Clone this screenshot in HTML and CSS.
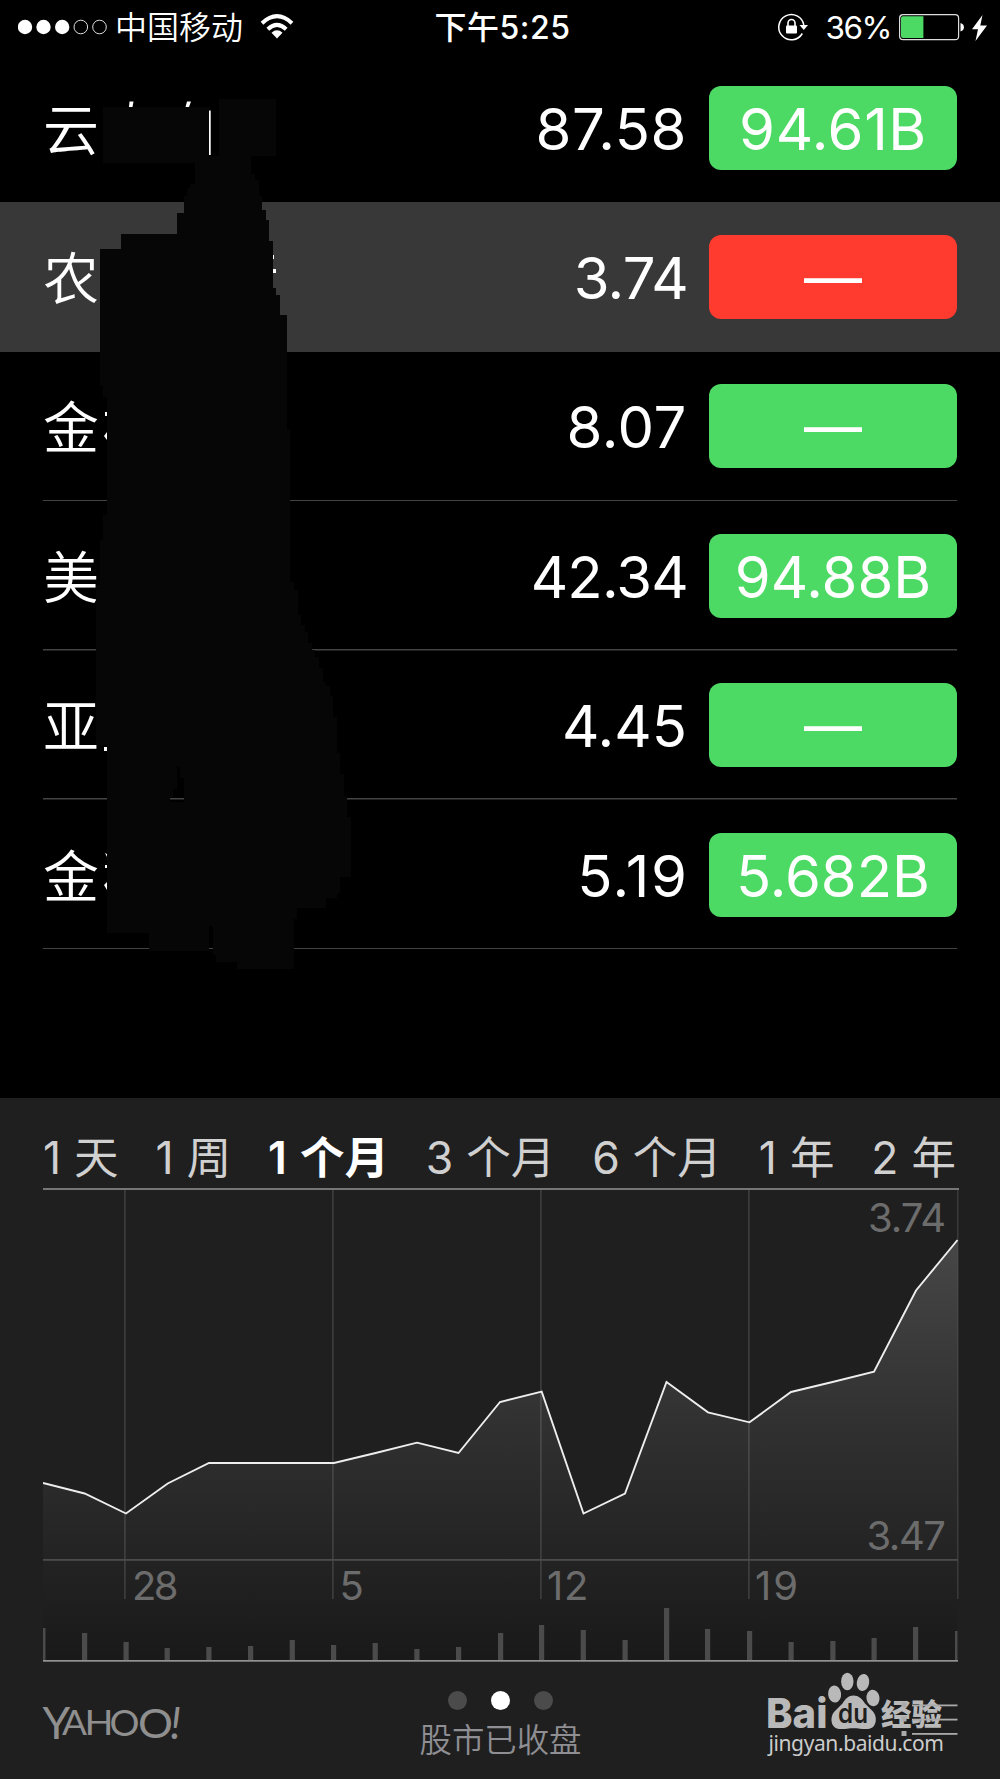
FILE: index.html
```html
<!DOCTYPE html>
<html lang="zh-CN">
<head>
<meta charset="utf-8">
<title>股市</title>
<link rel="stylesheet" href="styles.css">
</head>
<body>
<main class="screen">
  <header class="status">
    <div class="status-left">
      <svg class="signal" width="90" height="16" viewBox="0 0 90 16">
        <g fill="#fff"><circle cx="7" cy="8" r="7.2"/><circle cx="25.500" cy="8" r="7.2"/><circle cx="44.200" cy="8" r="7.2"/></g>
        <g fill="none" stroke="#ddd"><circle cx="62.800" cy="8" r="6.800"/><circle cx="81.500" cy="8" r="6.800"/></g>
      </svg>
      <span class="carrier">中国移动</span>
      <svg class="wifi" width="34" height="26" viewBox="0 0 34 26" fill="none" stroke="#fff" stroke-width="4">
        <path d="M2 9.2Q17-4.8 32 9.2M7.8 15.2Q17 6.600 26.200 15.200"/>
        <path fill="#fff" stroke="none" d="M11.5 18.7Q17 14 22.500 18.700L17 24.500Z"/>
      </svg>
    </div>
    <span class="clock">下午5:25</span>
    <div class="status-right">
      <svg class="lock" width="30" height="28" viewBox="0 0 30 28">
        <path d="M24.3 20.5A12.6 12.6 0 1 1 25.800 12" fill="none" stroke="#fff" stroke-width="1.5"/>
        <path d="M21.5 12h8.500l-4.200 5z" fill="#fff"/>
        <rect x="8" y="12.5" width="11" height="8" rx="1" fill="#fff"/>
        <path d="M10 13V10a3.500 3.500 0 0 1 7 0v3" fill="none" stroke="#fff" stroke-width="1.6"/>
      </svg>
      <span class="percent">36%</span>
      <svg class="battery" width="66" height="27" viewBox="0 0 66 27">
        <rect x=".6" y=".7" width="59" height="25" rx="3.5" fill="none" stroke="#ddd" stroke-width="1.2"/>
        <path d="M4 2.3h20.400v21.800H4a2 2 0 0 1-2-2V4.300a2 2 0 0 1 2-2z" fill="#4cd964"/>
        <path d="M61.5 9q3.400 1 3.400 4.200t-3.400 4.200z" fill="#fff"/>
      </svg>
      <svg class="bolt" width="15" height="26" viewBox="0 0 15 26"><path d="M10.5 0L0 14.300h6L3.500 26L15 10.500H8.300z" fill="#fff"/></svg>
    </div>
  </header>

  <section class="stocks">
    <div class="row"><span class="name">云</span><span class="price loose">87.58</span><span class="badge loose">94.61B</span></div>
    <div class="row row-active"><span class="name">农</span><span class="price tight">3.74</span><span class="badge badge-red">—</span></div>
    <div class="row row-line"><span class="name">金</span><span class="price loose">8.07</span><span class="badge">—</span></div>
    <div class="row row-line"><span class="name">美</span><span class="price tight">42.34</span><span class="badge">94.88B</span></div>
    <div class="row row-line"><span class="name">亚</span><span class="price">4.45</span><span class="badge">—</span></div>
    <div class="row row-line"><span class="name">金</span><span class="price looser">5.19</span><span class="badge">5.682B</span></div>
    <svg class="mask" width="360" height="980" viewBox="0 0 360 980">
      <path fill="#060606" d="M103 107H209V156H195V163H103ZM219 99H276V156H251V174H255V180H259V196H262V210H266V220H269V241H273V288H276V295H280V315H287V429H290V582H294V590H298V615H301V625H305V632H308V643H312V650H315V657H319V668H323V682H326V686H330V696H333V717H337V753H340V774H344V796H347V817H351V877H340V893H337V898H326V908H297V919H294V969H237V962H216V955H213V926H209V951H149V933H107V745H96V585H100V540H103V515H107V397H103V386H100V249H121V234H177V213H184V196H187V188H190V184H195V156H219ZM177 767V789H173V797H170V802H184V778H180V767Z" fill-rule="evenodd"/>
      <g fill="#fff">
        <path d="M129.500 101.500h4l-1 5.500h-3.500zM187 101.500h4l-2 5.500h-3.500zM209 110.500h1.700v44.500h-1.700zM273 269h3v4h-3zM273 255h1v4h-1zM105 412h2v4h-2zM104 436l3-4v8zM104 747h3v4h-3zM105 853l2 1v3zM105 865h2v3h-2zM104 885l3-3v8z"/>
      </g>
    </svg>
  </section>

  <section class="panel">
    <nav class="ranges">
      <span><b>1</b>天</span><span><b>1</b>周</span><span class="on"><b>1</b>个月</span><span><b>3</b>个月</span><span><b>6</b>个月</span><span><b>1</b>年</span><span><b>2</b>年</span>
    </nav>
    <svg class="chart" width="916" height="474" viewBox="43 1188 916 474">
      <defs>
        <linearGradient id="area" gradientUnits="userSpaceOnUse" x1="0" y1="1240" x2="0" y2="1661">
          <stop offset="0" stop-color="#474747"/><stop offset=".45" stop-color="#303030"/><stop offset=".76" stop-color="#232323"/><stop offset="1" stop-color="#191919"/>
        </linearGradient>
      </defs>
      <path fill="url(#area)" d="M43 1483L84.600 1493.500L126 1513.500L167.700 1483.500L209 1463H334L375.600 1453L417 1442.700L458.500 1453L500 1402L541.700 1391.700L583.500 1513.500L625 1493.500L666.500 1382L708 1412.300L749.500 1422.300L791 1392L832.500 1382L874 1371.700L916 1290.500L957.500 1240V1661H43Z"/>
      <g fill="#fff" fill-opacity=".12">
        <rect x="124" y="1190" width="1.800" height="409"/><rect x="332" y="1190" width="1.800" height="409"/><rect x="540" y="1190" width="1.800" height="409"/><rect x="748" y="1190" width="1.800" height="409"/><rect x="957" y="1190" width="1.500" height="409"/>
      </g>
      <rect x="43" y="1559" width="915" height="1.800" fill="#4c4c4c"/>
      <rect x="43" y="1188.200" width="916" height="1.600" fill="#8c8c8c"/>
      <path fill="#4b4b4b" d="M43 1628h2.500v33H43zM82 1633h5.200v28H82zM123.500 1642h5.200v19h-5.200zM164.600 1648h5.200v13h-5.200zM206.300 1647h5.200v14h-5.200zM248 1646h5.200v15h-5.200zM289.700 1640h5.200v21h-5.200zM331 1645h5.200v16H331zM372.600 1643h5.200v18h-5.200zM414.300 1649h5.200v12h-5.200zM456 1647h5.200v14H456zM498 1633h5.200v28H498zM539 1625h5.200v36H539zM580.700 1630h5.200v31h-5.200zM622.500 1640h5.200v21h-5.200zM664 1608h5.200v53H664zM705 1629h5.200v32H705zM747 1631h5.200v30H747zM788.500 1642h5.200v19h-5.200zM830.300 1641h5.200v20h-5.200zM871.500 1638h5.200v23h-5.200zM913 1627h5.200v34H913zM955 1631h2.500v30H955z"/>
      <rect x="43" y="1660" width="915" height="1.700" fill="#929292"/>
      <path fill="none" stroke="#eee" stroke-width="1.900" d="M43 1483L84.600 1493.500L126 1513.500L167.700 1483.500L209 1463H334L375.600 1453L417 1442.700L458.500 1453L500 1402L541.700 1391.700L583.500 1513.500L625 1493.500L666.500 1382L708 1412.300L749.500 1422.300L791 1392L832.500 1382L874 1371.700L916 1290.500L957.500 1240"/>
      <g class="chart-text">
        <text x="868" y="1232" textLength="78">3.74</text>
        <text x="866.500" y="1549.500" textLength="79.500">3.47</text>
        <text x="132" y="1599.500" textLength="46.500">28</text>
        <text x="339.500" y="1599.500">5</text>
        <text x="547" y="1599.500" textLength="41.500">12</text>
        <text x="755" y="1599.500" textLength="43">19</text>
      </g>
    </svg>
    <footer class="footer">
      <svg class="yahoo" width="150" height="50" viewBox="40 1695 150 50">
        <text><tspan x="42.500" y="1738.500" font-size="44.500">Y</tspan><tspan x="62" y="1735" font-size="34" textLength="25" lengthAdjust="spacingAndGlyphs">A</tspan><tspan x="84.500" y="1735" font-size="34" textLength="29" lengthAdjust="spacingAndGlyphs">H</tspan><tspan x="109.500" y="1735.500" font-size="36" textLength="30" lengthAdjust="spacingAndGlyphs">O</tspan><tspan x="138" y="1737.500" font-size="41" textLength="35" lengthAdjust="spacingAndGlyphs">O</tspan><tspan x="170" y="1738.500" font-size="44" font-style="italic">!</tspan></text>
      </svg>
      <div class="market">
        <div class="dots"><i></i><i class="current"></i><i></i></div>
        <span>股市已收盘</span>
      </div>
      <svg class="brand" width="200" height="90" viewBox="758 1669 200 90">
        <g fill="#b9b9b9">
          <ellipse cx="834.600" cy="1694" rx="6.500" ry="8.600" transform="rotate(-6 834.600 1694)"/>
          <ellipse cx="847.300" cy="1681.500" rx="6.200" ry="8.700"/>
          <ellipse cx="863" cy="1682.500" rx="6.200" ry="8.600" transform="rotate(10 863 1682.500)"/>
          <ellipse cx="873" cy="1698" rx="6.500" ry="8.300" transform="rotate(-8 873 1698)"/>
          <path d="M853.500 1695.500c5 0 8.500 3 11.500 8l8 8c5 6 3.500 17-5 17.500c-5 .4-9-.7-14.500-.7s-9 1.100-14 .7c-9-.6-10-12-5-17.500l8-8c3-5 6-8 11-8z"/>
        </g>
        <text class="bai" x="766" y="1727.500" textLength="61.500" lengthAdjust="spacingAndGlyphs">Bai</text>
        <text class="du" x="838" y="1723" textLength="30" lengthAdjust="spacingAndGlyphs">du</text>
        <text class="jy" x="881" y="1724.500" textLength="61" lengthAdjust="spacingAndGlyphs">经验</text>
        <text class="site" x="768.500" y="1750.500" textLength="175.500">jingyan.baidu.com</text>
        <g fill="#aaa"><rect x="901.500" y="1702.500" width="5" height="5"/><rect x="901.500" y="1716.500" width="5" height="5"/><rect x="901.500" y="1731" width="5" height="5"/>
        <rect x="912" y="1704.500" width="45.500" height="1.800"/><rect x="912" y="1718.700" width="45.500" height="1.800"/><rect x="912" y="1733" width="45.500" height="1.800"/></g>
      </svg>
    </footer>
  </section>
</main>
</body>
</html>
```
FILE: styles.css
```css
* { box-sizing: border-box; }
body { margin: 0; background: #000; color: #fff; font-family: Inter, "Noto Sans CJK SC", sans-serif; }
svg { display: block; flex: none; }
.screen { position: relative; width: 1000px; height: 1779px; display: flex; flex-direction: column; overflow: hidden; }

.status { height: 53px; display: grid; grid-template-columns: 1fr auto 1fr; align-items: center; padding: 0 13px 0 18px; }
.status-left, .status-right { display: flex; align-items: center; }
.status-right { justify-content: flex-end; }
.carrier { font-size: 32px; line-height: 53px; margin-left: 7px; padding-top: 1px; font-weight: 350; }
.wifi { margin-left: 17px; }
.clock { font-size: 32px; line-height: 53px; padding-top: 1px; font-weight: 500; letter-spacing: .5px; }
.percent { font-size: 31.5px; margin: 1px 8px 0 18px; letter-spacing: -1.5px; }
.battery, .bolt { margin-top: 1px; }
.bolt { margin-left: 7px; }

.stocks { height: 1045px; }
.row { height: 149.4px; padding: 0 43px; display: flex; align-items: center; }
.row-active { background: #383838; }
.row-line { background: linear-gradient(#434343, #434343) 43px 100% / 914px 1.5px no-repeat; }
.name { flex: 1; font-size: 56px; line-height: 84px; padding-top: 4px; font-weight: 350; }
.price { font-size: 58px; line-height: 84px; margin-right: 22px; padding-top: 2px; }
.badge { width: 248px; height: 84px; padding-top: 1px; border-radius: 12px; background: #4cd964; text-align: center; font-size: 58px; line-height: 84px; }
.badge-red { background: #ff3b30; }
.loose { letter-spacing: .6px; }
.looser { letter-spacing: 1.6px; margin-right: 20.5px; }
.tight { letter-spacing: -.8px; margin-right: 21px; }
.badge.loose { margin-right: 0; }
.mask { position: absolute; left: 0; top: 0; }

.panel { flex: 1; background: #1f1f1f; padding: 0 42px 0 43px; display: flex; flex-direction: column; }
.ranges { height: 90px; padding: 29px 2px 0 0; display: flex; justify-content: space-between; color: #d0d0d0; font-size: 44.5px; line-height: 62px; }
.ranges b { font-weight: inherit; margin-right: 13px; }
.ranges .on { color: #fff; font-weight: 600; }
.chart-text { font-size: 40px; fill: #6c6c6c; }

.footer { flex: 1; display: grid; grid-template-columns: 1fr auto 1fr; align-items: start; padding-top: 7px; }
.yahoo { margin: 26px 0 0 -3px; font-family: Lato, sans-serif; fill: #8f8f8f; overflow: visible; }
.market { display: flex; flex-direction: column; align-items: center; color: #8e8e93; font-size: 32.4px; line-height: 40px; padding-top: 22px; }
.market span { font-weight: 350; }
.dots { display: flex; gap: 24px; margin-bottom: 11px; }
.dots i { width: 19px; height: 19px; border-radius: 50%; background: #4b4b4b; }
.dots .current { background: #fff; }
.brand { justify-self: end; }
.bai { font: 800 41px Inter, sans-serif; fill: #b9b9b9; }
.du { font: 600 27px Inter, sans-serif; fill: #1f1f1f; }
.jy { font: 900 30px "Noto Sans CJK SC", sans-serif; fill: #b9b9b9; }
.site { font: 21px "Noto Sans", sans-serif; fill: #ccc; }
```
